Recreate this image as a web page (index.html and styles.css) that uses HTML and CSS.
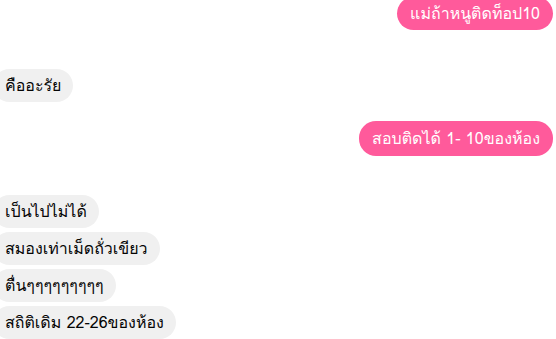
FILE: index.html
```html
<!DOCTYPE html>
<html lang="th">
  <head>
    <meta charset="UTF-8" />
    <meta name="viewport" content="width=device-width, initial-scale=1.0" />
    <title>Chat</title>
    <link rel="stylesheet" href="styles.css">
  </head>
  <body>
    <div class="chat">
      <div class="group mine first">
        <div class="bubble">แม่ถ้าหนูติดท็อป10</div>
      </div>
      <div class="group theirs">
        <div class="bubble">คืออะรัย</div>
      </div>
      <div class="group mine near">
        <div class="bubble tall">สอบติดได้ 1- 10ของห้อง</div>
      </div>
      <div class="group theirs">
        <div class="bubble">เป็นไปไม่ได้</div>
        <div class="bubble">สมองเท่าเม็ดถั่วเขียว</div>
        <div class="bubble">ตื่นๆๆๆๆๆๆๆๆๆ</div>
        <div class="bubble">สถิติเดิม 22-26ของห้อง</div>
      </div>
    </div>
  </body>
</html>
```

FILE: styles.css
```css
html,
body {
  overflow: hidden;
}
body {
  margin: 0;
  padding: 0;
  background: #fff;
  font-family: "Loma", "Garuda", "Tahoma", "Noto Sans Thai Looped", "Noto Sans Thai", sans-serif;
  font-size: 16px;
  color: #050505;
}
.chat {
  display: flex;
  flex-direction: column;
  padding: 0 3px 0 0;
}
.group {
  display: flex;
  flex-direction: column;
  gap: 4px;
  margin-top: 39px;
}
.mine {
  align-items: flex-end;
}
.theirs {
  align-items: flex-start;
  margin-left: -7px;
}
.first {
  margin-top: -3px;
}
.near {
  margin-top: 19px;
}
.bubble {
  height: 33px;
  line-height: 33px;
  padding: 0 12px;
  border-radius: 17px;
  background: #f0f0f0;
  white-space: nowrap;
}
.mine .bubble {
  background: #ff5a9b;
  color: #fff;
  padding: 0 13px;
}
.bubble.tall {
  height: 35px;
  line-height: 35px;
}
```
